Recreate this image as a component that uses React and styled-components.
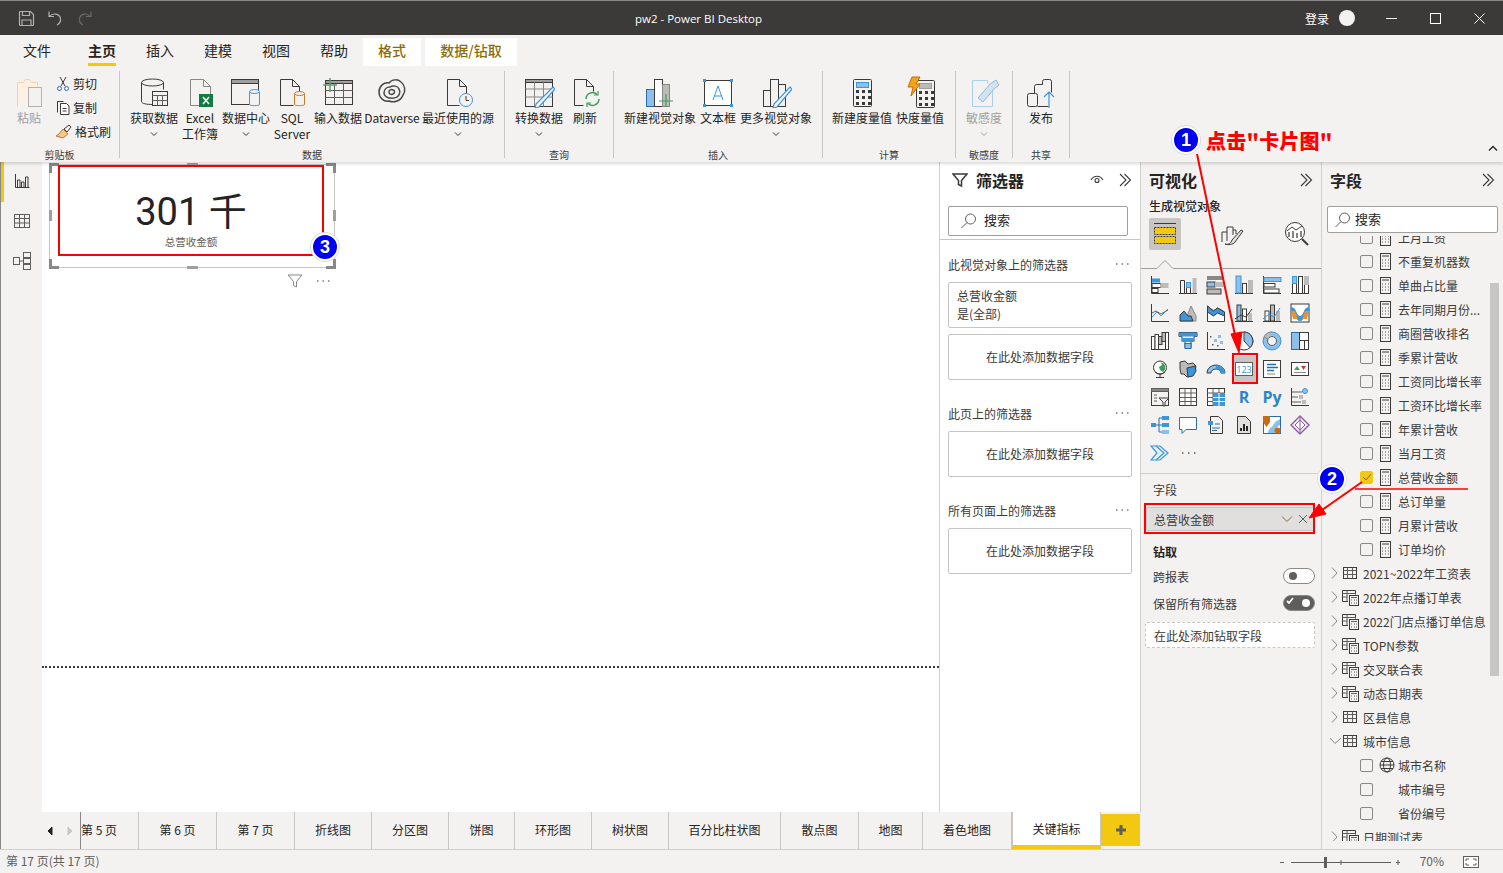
import React from 'react';
import styled, { createGlobalStyle, css } from 'styled-components';

const GlobalStyle = createGlobalStyle`
  html, body { margin: 0; padding: 0; height: 100%; overflow: hidden; }
  body {
    font-family: "Noto Sans CJK SC", "Noto Sans", sans-serif;
    font-size: 12px;
    color: #252423;
    background: #f3f2f1;
  }
  svg { display: block; flex: none; }
`;

const Window = styled.div`
  position: relative;
  width: 1503px;
  height: 873px;
  display: flex;
  flex-direction: column;
  overflow: hidden;
`;

/* ---------- title bar ---------- */
const TitleBar = styled.div`
  height: 34px;
  flex: none;
  background: #3b3a39;
  border-top: 1px solid #8a8886;
  display: flex;
  align-items: center;
  padding-right: 2px;
  color: #fff;
`;
const QuickTools = styled.div`
  display: flex;
  align-items: center;
  gap: 12px;
  width: 380px;
  padding-left: 18px;
`;
const WindowTitle = styled.div`
  flex: 1;
  text-align: center;
  font-family: "Open Sans", "Noto Sans CJK SC", sans-serif;
  font-size: 11.5px;
  padding-right: 306px;
`;
const SignIn = styled.div`
  display: flex;
  align-items: center;
  gap: 10px;
  margin-right: 14px;
`;
const Avatar = styled.div`
  width: 16px;
  height: 16px;
  border-radius: 50%;
  background: #f3f2f1;
`;
const WinButton = styled.div`
  width: 44px;
  display: flex;
  justify-content: center;
`;

/* ---------- ribbon ---------- */
const TabRow = styled.div`
  height: 31px;
  flex: none;
  display: flex;
  align-items: flex-end;
  padding-left: 8px;
  background: #f3f2f1;
`;
const RibbonTab = styled.div`
  width: ${p => p.$w || 58}px;
  height: 28px;
  box-sizing: border-box;
  padding-bottom: 5px;
  margin-left: ${p => p.$before || 0}px;
  margin-right: ${p => p.$gap || 0}px;
  display: flex;
  justify-content: center;
  align-items: center;
  font-size: 14px;
  position: relative;
  color: #252423;
  ${p => p.$context && css`
    background: #fff;
    color: #8a6d0b;
    font-weight: 500;
  `}
  ${p => p.$active && css`
    font-weight: 700;
    &::after {
      content: '';
      position: absolute;
      left: 15px;
      right: 15px;
      bottom: 0;
      height: 3px;
      background: #f2c811;
    }
  `}
`;
const Ribbon = styled.div`
  height: 96px;
  flex: none;
  display: flex;
  background: #f3f2f1;
  box-shadow: 0 2px 3px rgba(0, 0, 0, .14);
  position: relative;
  z-index: 2;
`;
const Group = styled.div`
  width: ${p => p.$w}px;
  height: 87px;
  margin-top: 5px;
  box-sizing: border-box;
  border-right: 1px solid #c8c6c4;
  display: flex;
  flex-direction: column;
  flex: none;
`;
const GroupBody = styled.div`
  flex: 1;
  display: flex;
  padding-left: ${p => p.$pad || 0}px;
`;
const GroupLabel = styled.div`
  height: 14px;
  margin-bottom: -4px;
  line-height: 14px;
  font-size: 10px;
  text-align: center;
  color: #3b3a39;
`;
const RibbonButton = styled.div`
  width: ${p => p.$w}px;
  flex: none;
  display: flex;
  flex-direction: column;
  align-items: center;
  color: ${p => (p.$muted ? '#a19f9d' : '#252423')};
`;
const IconBox = styled.div`
  height: 34px;
  padding-top: 5px;
`;
const BtnLine = styled.div`
  height: 16px;
  line-height: 16px;
  font-size: 12px;
  white-space: nowrap;
  display: flex;
  align-items: center;
`;
const SmallStack = styled.div`
  display: flex;
  flex-direction: column;
  gap: 5px;
  padding: 3px 0 0 8px;
`;
const SmallButton = styled.div`
  display: flex;
  align-items: center;
  gap: 2px;
  height: 19px;
`;
const Collapse = styled.div`
  margin: 79px 0 0 auto;
  padding-right: 5px;
`;

/* ---------- body ---------- */
const Body = styled.div`
  flex: 1;
  display: flex;
  min-height: 0;
`;
const Rail = styled.div`
  width: 41px;
  flex: none;
  background: #f3f2f1;
  border-left: 1px solid #8a8886;
  border-right: 1px solid #c8c6c4;
  box-sizing: content-box;
  margin-right: -1px;
  display: flex;
  flex-direction: column;
`;
const RailItem = styled.div`
  height: 40px;
  box-sizing: border-box;
  padding-bottom: 2px;
  display: flex;
  align-items: center;
  justify-content: center;
  box-shadow: ${p => (p.$active ? 'inset 3px 0 0 #f2c811' : 'none')};
`;
const Center = styled.div`
  width: 1099px;
  flex: none;
  display: flex;
  flex-direction: column;
`;
const TopRow = styled.div`
  height: 650px;
  flex: none;
  display: flex;
  background: #fff;
`;
const Canvas = styled.div`
  width: 897px;
  flex: none;
  border-right: 1px solid #d2d0ce;
  background: #fff;
`;
const Page = styled.div`
  position: relative;
  height: 503px;
  margin-top: 1px;
  border-bottom: 2px dotted #3b3a39;
`;
const CardFrame = styled.div`
  position: absolute;
  left: 7px;
  top: 1px;
  width: 284px;
  height: 102px;
  border: 1px solid #c8c6c4;
`;
const RedRect = styled.div`
  position: absolute;
  left: 8px;
  top: 0;
  width: 262px;
  height: 87px;
  border: 2px solid #f00;
  display: flex;
  flex-direction: column;
  align-items: center;
`;
const CardValue = styled.div`
  font-family: Roboto, "Noto Sans CJK SC", sans-serif;
  font-size: 38px;
  line-height: 46px;
  margin-top: 22px;
  color: #252423;
  white-space: pre;
`;
const CardLabel = styled.div`
  font-size: 10.5px;
  line-height: 14px;
  color: #605e5c;
`;
const handleSpots = {
  tl: 'left:-1px;top:-2px;border-left-width:3px;border-top-width:3px;',
  tr: 'right:-2px;top:-2px;border-right-width:3px;border-top-width:3px;',
  bl: 'left:-1px;bottom:-2px;border-left-width:3px;border-bottom-width:3px;',
  br: 'right:-2px;bottom:-2px;border-right-width:3px;border-bottom-width:3px;',
};
const Corner = styled.div`
  position: absolute;
  width: 7px;
  height: 7px;
  border: 0 solid #8a8886;
  ${p => handleSpots[p.$at]}
`;
const Mid = styled.div`
  position: absolute;
  background: #a19f9d;
  ${p => (p.$at === 't' || p.$at === 'b')
    ? `width:11px;height:3px;left:137px;${p.$at === 't' ? 'top:-2px' : 'bottom:-2px'};`
    : `width:3px;height:11px;top:45px;${p.$at === 'l' ? 'left:-1px' : 'right:-2px'};`}
`;
const CardTools = styled.div`
  position: absolute;
  left: 245px;
  top: 110px;
  display: flex;
  align-items: center;
  gap: 12px;
`;

/* ---------- filter pane ---------- */
const FilterPane = styled.div`
  flex: 1;
  background: #fff;
  border-right: 1px solid #d2d0ce;
  display: flex;
  flex-direction: column;
`;
const PaneHead = styled.div`
  height: 36px;
  flex: none;
  display: flex;
  align-items: center;
  padding: ${p => p.$pad || '0 8px'};
`;
const PaneTitle = styled.div`
  font-size: 16px;
  font-weight: 700;
  flex: 1;
  margin-left: ${p => p.$ml || 0}px;
  color: #252423;
`;
const Gap = styled.span`
  width: ${p => p.$w}px;
  flex: none;
`;
const SearchBox = styled.div`
  height: ${p => p.$h || 28}px;
  flex: none;
  margin: ${p => p.$m || '8px 12px 0 8px'};
  border: 1px solid #a19f9d;
  border-radius: 2px;
  background: #fff;
  display: flex;
  align-items: center;
  gap: ${p => p.$gap || 6}px;
  padding-left: ${p => p.$pad || 11}px;
  color: #252423;
  font-size: 13px;
`;
const SearchText = styled.span`
  margin-top: -3px;
`;
const PaneRule = styled.div`
  height: 1px;
  background: #c8c6c4;
  margin-top: 3px;
`;
const FilterHead = styled.div`
  display: flex;
  justify-content: space-between;
  align-items: center;
  height: 20px;
  margin: ${p => p.$top}px 10px ${p => p.$bottom}px 8px;
  color: #3b3a39;
`;
const FilterCard = styled.div`
  height: 44px;
  margin: 0 8px 6px;
  border: 1px solid #c8c6c4;
  border-radius: 2px;
  display: flex;
  flex-direction: column;
  justify-content: center;
  box-sizing: content-box;
  line-height: 18px;
  color: #3b3a39;
  ${p => p.$drop
    ? 'align-items:center;'
    : 'padding-left:8px;padding-bottom:1px;height:43px;'}
`;

/* ---------- page tabs ---------- */
const PageTabs = styled.div`
  flex: 1;
  display: flex;
  align-items: stretch;
  background: #f3f2f1;
`;
const TabNav = styled.div`
  width: 39px;
  flex: none;
  display: flex;
  align-items: center;
  gap: 14px;
  padding-left: 5px;
  box-sizing: border-box;
  border-right: 1px solid #8a8886;
`;
const PageTab = styled.div`
  width: ${p => p.$w}px;
  flex: none;
  box-sizing: border-box;
  display: flex;
  align-items: center;
  justify-content: ${p => (p.$clip ? 'flex-start' : 'center')};
  padding-bottom: 2px;
  white-space: pre;
  border-right: 1px solid #c8c6c4;
  color: #252423;
  ${p => p.$active && css`
    background: #fff;
    padding-bottom: 0;
    border-bottom: 4px solid #f2c811;
    border-left: 1px solid #c8c6c4;
  `}
`;
const AddTab = styled.div`
  width: 39px;
  height: 32px;
  margin-top: 2px;
  flex: none;
  background: #f2c811;
  display: flex;
  align-items: center;
  justify-content: center;
`;

/* ---------- visualizations pane ---------- */
const VizPane = styled.div`
  width: 180px;
  flex: none;
  box-sizing: content-box;
  background: #f3f2f1;
  border-right: 1px solid #d2d0ce;
  display: flex;
  flex-direction: column;
`;
const SubTitle = styled.div`
  font-weight: 500;
  line-height: 16px;
  padding-left: 8px;
  color: #252423;
`;
const VizTabs = styled.div`
  display: flex;
  align-items: center;
  height: 32px;
  margin: 4px 0 12px 8px;
  position: relative;
`;
const VizTab = styled.div`
  width: 32px;
  height: 32px;
  margin-right: ${p => p.$gap || 0}px;
  border-radius: 2px;
  display: flex;
  align-items: center;
  justify-content: center;
  background: ${p => (p.$active ? '#c8c6c4' : 'transparent')};
`;
const Notch = styled.svg`
  margin-top: -4px;
`;
const VizGrid = styled.div`
  display: grid;
  grid-template-columns: repeat(6, 28px);
  grid-auto-rows: 28px;
  padding: 2px 0 0 5px;
`;
const VizCell = styled.div`
  display: flex;
  align-items: center;
  justify-content: center;
  background: ${p => (p.$on ? '#c8c6c4' : 'transparent')};
  ${p => p.$on && 'margin: 1px 2px; '}
`;
const LangGlyph = styled.span`
  font-family: "Open Sans", sans-serif;
  font-weight: 700;
  font-size: ${p => p.$s}px;
  color: #2a86c8;
`;
const PaneRule2 = styled.div`
  height: 1px;
  background: #d2d0ce;
  margin-top: 6px;
`;
const WellTitle = styled.div`
  line-height: 16px;
  margin: 8px 0 9px 12px;
  color: #3b3a39;
`;
const Well = styled.div`
  height: 24px;
  margin: 0 6px 0 5px;
  box-sizing: border-box;
  background: #e1dfdd;
  border: 1px solid #c8c6c4;
  border-radius: 2px;
  display: flex;
  align-items: center;
  padding: 0 6px 0 7px;
  color: #3b3a39;
`;
const WellText = styled.div`
  flex: 1;
`;
const DrillTitle = styled.div`
  font-weight: 700;
  line-height: 16px;
  margin: 13px 0 8px 12px;
  color: #252423;
`;
const ToggleRow = styled.div`
  display: flex;
  justify-content: space-between;
  align-items: center;
  height: 16px;
  margin: 0 6px ${p => p.$mb || 0}px 12px;
  color: #3b3a39;
`;
const Toggle = styled.div`
  width: 32px;
  height: 16px;
  box-sizing: border-box;
  border-radius: 8px;
  border: 1px solid #8a8886;
  background: ${p => (p.$on ? '#605e5c' : '#fff')};
  position: relative;
  &::after {
    content: '';
    position: absolute;
    top: 3px;
    left: ${p => (p.$on ? '18px' : '5px')};
    width: 8px;
    height: 8px;
    border-radius: 50%;
    background: ${p => (p.$on ? '#fff' : '#605e5c')};
  }
`;
const DropZone = styled.div`
  height: 26px;
  margin: 11px 6px 0 4px;
  box-sizing: border-box;
  border: 1px dashed #c8c6c4;
  border-radius: 2px;
  background: #fff;
  display: flex;
  align-items: center;
  padding-left: 8px;
  color: #3b3a39;
`;

/* ---------- fields pane ---------- */
const FieldsPane = styled.div`
  flex: 1;
  background: #f3f2f1;
  display: flex;
  flex-direction: column;
  position: relative;
  min-width: 0;
`;
const FieldScroll = styled.div`
  flex: 1;
  overflow: hidden;
  margin: 3px 0 8px;
  position: relative;
`;
const FieldList = styled.div`
  margin-top: -11px;
`;
const FieldRow = styled.div`
  height: 24px;
  display: flex;
  align-items: center;
  white-space: nowrap;
  color: #3b3a39;
  padding-left: ${p => p.$pad}px;
`;
const CheckBox = styled.div`
  width: 11px;
  height: 11px;
  box-sizing: content-box;
  border: 1px solid #8a8886;
  border-radius: 2px;
  margin-right: 6px;
  flex: none;
  display: flex;
  align-items: center;
  justify-content: center;
  ${p => p.$on && 'background:#f2c811;border-color:#f2c811;'}
`;
const FieldIcon = styled.div`
  width: ${p => p.$w || 19}px;
  flex: none;
  display: flex;
  justify-content: flex-start;
`;
const FieldName = styled.div`
  margin-left: ${p => p.$ml || 0}px;
`;
const Chevron = styled.div`
  width: ${p => p.$w || 12}px;
  flex: none;
`;
const ScrollThumb = styled.div`
  position: absolute;
  left: 168px;
  top: 121px;
  width: 9px;
  height: 393px;
  background: #c8c6c4;
`;

/* ---------- status bar ---------- */
const StatusBar = styled.div`
  height: 23px;
  flex: none;
  border-top: 1px solid #d2d0ce;
  background: #f3f2f1;
  display: flex;
  align-items: center;
  justify-content: space-between;
  padding: 0 24px 0 6px;
  color: #605e5c;
`;
const PageCount = styled.div`
  padding-bottom: 3px;
`;
const Zoom = styled.div`
  display: flex;
  align-items: center;
  color: #605e5c;
`;
const ZoomPct = styled.div`
  margin: 0 19px 0 20px;
  padding-bottom: 2px;
`;

/* ---------- annotations, they lie over everything ---------- */
const Marks = styled.svg`
  position: absolute;
  left: 0;
  top: 0;
  pointer-events: none;
  z-index: 6;
`;
const Badge = styled.div`
  position: absolute;
  left: ${p => p.$x - 14}px;
  top: ${p => p.$y - 14}px;
  width: 24px;
  height: 24px;
  border-radius: 50%;
  background: #0000f0;
  border: 2px solid #fff;
  box-shadow: 0 0 0 1px #ddd;
  color: #fff;
  font-family: "Liberation Sans", sans-serif;
  font-weight: 700;
  font-size: 18px;
  line-height: 24px;
  text-align: center;
  z-index: 7;
`;
const Callout = styled.div`
  position: absolute;
  left: 1206px;
  top: 127px;
  color: #f00;
  font-weight: 900;
  font-size: 20px;
  letter-spacing: .2px;
  line-height: 28px;
  white-space: nowrap;
  z-index: 7;
`;

/* ---------- icons ---------- */
const D = '#3b3a39';
const B = '#3a96dd';
const L = '#8cc0ea';
const G = '#bdbbb9';

const Ico = ({ s = 32, h, vb, children, c = D, sw = 1 }) => (
  <svg width={s} height={h || s} viewBox={vb || `0 0 ${s} ${h || s}`} fill="none" stroke={c} strokeWidth={sw}>
    {children}
  </svg>
);

const Caret = ({ c = '#3b3a39' }) => (
  <Ico s={8} h={6} c={c}><path d="M1 1.5l3 3 3-3" /></Ico>
);

const PasteIcon = () => (
  <Ico s={30} h={34}>
    <path d="M3.5 30.5v-24h6l2-3h4l2 3h6v4" stroke="#f3d2a8" fill="#fbf0e2" />
    <rect x="14.5" y="11.5" width="13" height="19" stroke="#b3b0ad" fill="#f3f2f1" />
  </Ico>
);
const CutIcon = () => (
  <Ico s={16}><path d="M5 1l5 9M11 1L6 10" /><circle cx="4.5" cy="12.5" r="2" stroke="#2b6cb0" /><circle cx="11.5" cy="12.5" r="2" stroke="#2b6cb0" /></Ico>
);
const CopyIcon = () => (
  <Ico s={16}><path d="M2.5 12.5v-11h6" /><path d="M5.5 14.5v-11h6l2.500 2.500v8.500z" fill="#fff" /><path d="M7.500 8.500h4M7.500 11h4" /></Ico>
);
const BrushIcon = () => (
  <Ico s={18} h={16}><path d="M9 5l5-4 2 2-4 5z" /><path d="M8 5l5 5-5 4-7-2 3-2z" fill="#f3c78d" stroke="#c9772a" /></Ico>
);
const GetDataIcon = () => (
  <Ico>
    <path d="M3.500 6.500v19c0 2 5 3 11 3" /><path d="M25.500 6.500v7" /><ellipse cx="14.500" cy="6.500" rx="11" ry="3.500" />
    <rect x="14.500" y="15.500" width="15" height="14" fill="#f3f2f1" />
    <path d="M14.500 19.500h15M14.500 24.500h15M19.500 19.500v10M24.500 19.500v10" stroke="#605e5c" />
  </Ico>
);
const ExcelIcon = () => (
  <Ico>
    <path d="M6.500 29.500v-26h13l7 7v8M6.500 29.500h10" stroke="#8a8886" />
    <path d="M19.500 3.500v7h7" stroke="#8a8886" />
    <rect x="15" y="18" width="14" height="13" fill="#107c41" stroke="none" />
    <path d="M19 21l6 7M25 21l-6 7" stroke="#fff" strokeWidth="1.500" />
  </Ico>
);
const DataHubIcon = () => (
  <Ico>
    <rect x="1.500" y="3.500" width="27" height="25" />
    <rect x="1.500" y="3.500" width="27" height="4" fill="#a19f9d" />
    <path d="M19.500 15.500v13c0 1.500 10 1.500 10 0v-13" fill="#f3f2f1" stroke={B} />
    <ellipse cx="24.500" cy="15.500" rx="5" ry="2" stroke={B} fill="#f3f2f1" />
  </Ico>
);
const SqlIcon = () => (
  <Ico>
    <path d="M4.500 29.500v-26h12l7 7v6M4.500 29.500h13" /><path d="M16.500 3.500v7h7" />
    <path d="M18.500 17.500v11c0 1.500 10 1.500 10 0v-11" fill="#f3f2f1" stroke="#ca7a2b" />
    <ellipse cx="23.500" cy="17.500" rx="5" ry="2" stroke="#ca7a2b" fill="#f3f2f1" />
  </Ico>
);
const EnterIcon = () => (
  <Ico>
    <rect x="3.500" y="4.500" width="27" height="24" />
    <rect x="3.500" y="4.500" width="27" height="3" fill="#a19f9d" />
    <path d="M3.500 14.500h27M3.500 21.500h27M12.500 7.500v21M21.500 7.500v21" stroke="#605e5c" />
    <path d="M1 9h14M8 2v14" stroke="#5f9e6e" strokeWidth="1.500" />
  </Ico>
);
const DataverseIcon = () => (
  <Ico sw={1.500} c="#4a4948">
    <path d="M3 16c0-6 5-10 10-9 3-4 9-4 12-1 4 3 5 9 2 13-2 6-9 8-14 6-5 1-10-3-10-9z" />
    <path d="M8 17c0-4 3-6 6-6 3-2 8-1 9 2 2 3 0 7-2 8-3 2-6 1-8 1-3-1-5-3-5-5z" />
    <path d="M13 16c0-2 2-3 4-2 2 0 2 3 0 4-2 1-4 0-4-2z" />
  </Ico>
);
const RecentIcon = () => (
  <Ico>
    <path d="M5.500 29.500v-26h12l7 7v7M5.500 29.500h12" /><path d="M17.500 3.500v7h7" />
    <circle cx="24" cy="24" r="6.500" stroke={B} fill="#f3f2f1" /><path d="M24 20v4.500h3" />
  </Ico>
);
const TransformIcon = () => (
  <Ico>
    <rect x="2.500" y="3.500" width="27" height="27" />
    <rect x="2.500" y="3.500" width="27" height="3" fill="#a19f9d" />
    <path d="M2.500 13h27M2.500 21h27M11.500 6.500v24M20.500 6.500v24" stroke="#8a8886" />
    <path d="M30 11l2 2-16 18-4 1 1-4z" fill="#f3f2f1" stroke={B} strokeWidth="1.200" />
  </Ico>
);
const RefreshIcon = () => (
  <Ico>
    <path d="M5.500 29.500v-26h12l7 7v5M5.500 29.500h9" /><path d="M17.500 3.500v7h7" />
    <path d="M17 23a6.500 6.500 0 0 1 11-4.500M30 23a6.500 6.500 0 0 1-11 4.500" stroke="#3f9d58" strokeWidth="1.500" />
    <path d="M29 15v4h-4M18 31v-4h4" stroke="#3f9d58" strokeWidth="1.200" />
  </Ico>
);
const NewVisualIcon = () => (
  <Ico>
    <rect x="2.500" y="13.500" width="8" height="17" fill={L} stroke="#2b6cb0" />
    <rect x="10.500" y="3.500" width="8" height="27" fill="#fff" />
    <rect x="18.500" y="8.500" width="7" height="22" fill={G} stroke="#8a8886" />
    <path d="M15 25h14M22 18v13" stroke="#3f9d58" strokeWidth="1.200" />
  </Ico>
);
const TextBoxIcon = () => (
  <Ico>
    <rect x="2.500" y="4.500" width="27" height="25" fill="#fff" />
    <path d="M11 24l5-14 5 14M12.500 20h7" stroke={B} />
    <rect x="1" y="3" width="3" height="3" fill={B} stroke="none" />
    <rect x="28" y="3" width="3" height="3" fill={B} stroke="none" />
    <rect x="1" y="28" width="3" height="3" fill={B} stroke="none" />
    <rect x="28" y="28" width="3" height="3" fill={B} stroke="none" />
  </Ico>
);
const MoreVisualIcon = () => (
  <Ico>
    <rect x="3.500" y="14.500" width="7" height="16" /><rect x="10.500" y="3.500" width="8" height="27" /><rect x="18.500" y="8.500" width="7" height="22" />
    <path d="M30 11l2 2-15 18-4 1 1-4z" fill="#f3f2f1" stroke={B} strokeWidth="1.200" />
  </Ico>
);
const CalcKeys = ({ x, y }) => (
  <g fill={D} stroke="none">
    {[0, 1, 2].map(r => [0, 1, 2].map(k => (
      <rect key={`${r}${k}`} x={x + k * 6} y={y + r * 6} width="3" height="3" />
    )))}
  </g>
);
const MeasureIcon = () => (
  <Ico>
    <rect x="7.500" y="3.500" width="18" height="27" rx="1" />
    <rect x="10.500" y="6.500" width="12" height="5" fill={L} stroke={B} />
    <CalcKeys x={10} y={14} />
  </Ico>
);
const QuickIcon = () => (
  <Ico>
    <rect x="12.500" y="4.500" width="18" height="27" rx="1" />
    <rect x="15.500" y="7.500" width="12" height="5" fill={G} stroke="#a19f9d" />
    <CalcKeys x={15} y={15} />
    <path d="M8 1h8l-4 7h4L7 20l2-9H4z" fill="#f2a516" stroke="#c8690f" />
  </Ico>
);
const SensitivityIcon = () => (
  <Ico>
    <path d="M4.500 4.500h15v3M4.500 4.500v26h20v-18" stroke="#a9d0ee" />
    <path d="M10 22l12-14 6-4 3 5-5 4-11 13z" fill="#cfe3f3" stroke="#9bb8cc" />
  </Ico>
);
const PublishIcon = () => (
  <Ico>
    <rect x="2.500" y="17.500" width="10" height="13" rx="2" />
    <path d="M9.500 17.500v-7a2 2 0 0 1 2-2h6" /><path d="M17.500 8.500v-3a2 2 0 0 1 2-2h5a2 2 0 0 1 2 2v11" />
    <path d="M12.500 30.500h11" />
    <path d="M24 32V16M19 21l5-5 5 5" stroke={B} strokeWidth="1.200" />
  </Ico>
);

const FunnelIcon = ({ s = 16, c = D, sw = 1.500 }) => (
  <Ico s={16} vb="0 0 16 16" c={c} sw={sw}><path d="M1 2h14l-5.500 6.500v5.500l-3 -1.500V8.500z" /></Ico>
);
const SearchIcon = () => (
  <Ico s={18} c="#605e5c"><circle cx="10.500" cy="7" r="5" /><path d="M7 10.500L1.500 16" /></Ico>
);
const DoubleChevron = () => (
  <Ico s={14} c="#3b3a39" sw={1.100}><path d="M2 1l6 6-6 6M6.500 1l6 6-6 6" /></Ico>
);
const CalcField = () => (
  <Ico s={12} h={17} c="#3b3a39">
    <rect x="1.500" y="0.500" width="10" height="16" />
    <path d="M3 3h7" />
    <path d="M3 7h1M6 7h1M9 7h1M3 10h1M6 10h1M9 10h1M3 13h1M6 13h1M9 13h1" stroke="#605e5c" />
  </Ico>
);
const TableField = () => (
  <Ico s={16} h={14}>
    <rect x="1.500" y="1.500" width="13" height="11" />
    <path d="M1.500 4.500h13M1.500 8.500h13M5.500 1.500v11M10.500 1.500v11" stroke="#605e5c" />
  </Ico>
);
const CalcTableField = () => (
  <Ico s={17} h={17}>
    <path d="M6 12.500H0.500v-11h13v4" />
    <path d="M0.500 4.500h13M0.500 8h5M5 1.500v11" stroke="#605e5c" />
    <rect x="7.500" y="6.500" width="9" height="10" fill="#f3f2f1" />
    <path d="M9 8.500h6M9 11h1M12 11h1M14 11h1M9 14h1M12 14h1M14 14h1" stroke="#605e5c" />
  </Ico>
);
const GlobeField = () => (
  <Ico s={16}>
    <circle cx="8" cy="8" r="7" /><ellipse cx="8" cy="8" rx="3.500" ry="7" /><path d="M1 8h14M2 4.500h12M2 11.500h12" />
  </Ico>
);
const Arrow = ({ down }) => (
  <Ico s={10} h={14} c="#8a8886">
    <path d={down ? 'M1 4l5 5 5-5' : 'M2 1.500l5 5.500-5 5.500'} />
  </Ico>
);

/* the visual gallery, 20px drawings */
const V = ({ children }) => <Ico s={20}>{children}</Ico>;
const axis = 'M1.500 1v17.500H19';
const base = 'M1 18.500h18';
const gallery = [
  <V><path d={axis} /><rect x="2" y="3.500" width="8" height="4" fill={B} stroke="none" /><rect x="2" y="8.500" width="9" height="4" fill="#fff" /><rect x="11" y="8.500" width="7" height="4" fill={G} stroke={G} /><rect x="2" y="13.500" width="6" height="4" fill="#fff" /></V>,
  <V><path d={base} /><path d="M2.500 18V5.500h4V18M8.500 18V7.500h4V18" /><rect x="8.500" y="7.500" width="4" height="5" fill={L} stroke={B} /><rect x="14.500" y="3" width="4" height="15" fill={G} stroke="none" /></V>,
  <V><rect x="1" y="1" width="16" height="4" fill="#8a8886" stroke="none" /><rect x="1" y="7" width="8" height="5" fill={L} stroke={D} /><rect x="9" y="7" width="10" height="5" fill={G} stroke="none" /><rect x="1" y="14" width="14" height="5" fill={G} stroke={D} /></V>,
  <V><path d={base} /><rect x="2" y="1" width="5" height="17" fill={L} stroke={B} /><rect x="8.500" y="8.500" width="4" height="10" fill="#fff" /><rect x="14" y="5" width="5" height="13" fill={G} stroke="none" /></V>,
  <V><path d={axis} /><rect x="2" y="2.500" width="17" height="4" fill={L} stroke={B} /><rect x="2" y="8.500" width="11" height="3.500" fill="#fff" /><rect x="2" y="14" width="15" height="4" fill="#fff" /></V>,
  <V><path d={base} /><rect x="2.500" y="1.500" width="4" height="17" fill="#fff" /><rect x="2.500" y="1.500" width="4" height="7" fill={L} stroke={B} /><rect x="8.500" y="1.500" width="4" height="17" fill="#fff" /><rect x="14.500" y="1.500" width="4" height="17" fill="#fff" /><rect x="14.500" y="1.500" width="4" height="8" fill={G} stroke={G} /></V>,
  <V><path d={axis} /><path d="M2 14l5-5 4 4 7-7" stroke={B} /><path d="M2 10l4-2 5 3 7-4" stroke="#605e5c" /></V>,
  <V><path d="M2 18l4-8 3 3 4-10 5 10v5z" fill={G} stroke="#8a8886" /><path d="M2 18V12l4-4 4 5 3 0 2 5z" fill={B} stroke={D} /></V>,
  <V><path d="M1.500 3l6 5 4-3 7 4v9.500h-17z" fill="#fff" stroke={D} /><path d="M1.500 3l6 5 4-3 7 4v4l-7-3-4 3-6-4z" fill={B} stroke={D} /></V>,
  <V><path d={base} /><rect x="3" y="2" width="4" height="16" fill={L} stroke={D} /><rect x="8.500" y="6" width="4" height="12" fill="#fff" /><rect x="14" y="10" width="4" height="8" fill={G} stroke="none" /><path d="M1 16l6-4 5 2 6-8" /></V>,
  <V><path d={base} /><rect x="3" y="8" width="4" height="10" fill="#fff" /><rect x="8.500" y="2" width="4" height="16" fill={G} stroke={D} /><rect x="14" y="8" width="4" height="10" fill={G} stroke="none" /><path d="M1 16l6-5 5 3 6-9" stroke={B} /></V>,
  <V><rect x="1" y="1" width="18" height="18" fill="#fff" /><path d="M1 4c6 0 5 9 9 9s3-9 9-9v6c-6 0-4 8-9 8s-3-8-9-8z" fill={B} stroke="none" /><path d="M1 8h4l3 8H3zM19 8h-4l-3 8h5z" fill="#e8932f" stroke="none" /></V>,
  <V><path d="M1.500 18.500h17" /><rect x="1.500" y="5.500" width="3.500" height="13" fill="#fff" /><rect x="5" y="3.500" width="3.500" height="15" fill="#fff" /><rect x="8.500" y="5.500" width="3.500" height="8" fill={G} stroke={D} /><rect x="12" y="1.500" width="3.500" height="9" fill={G} stroke={D} /><rect x="15.500" y="1.500" width="3" height="17" fill="#fff" /></V>,
  <V><path d="M1 1.500h18v4h-3v5h-3v6H7v-6H4v-5H1z" fill="none" /><rect x="1" y="1.500" width="18" height="4" fill={B} stroke="none" /><rect x="4" y="7" width="12" height="4" fill={B} stroke="none" /><rect x="7" y="12.500" width="6" height="5" fill={L} stroke="#2b6cb0" /></V>,
  <V><path d={axis} /><g fill={L} stroke="none"><rect x="12" y="4" width="3" height="3" /><rect x="8" y="8" width="3" height="3" /><rect x="14" y="10" width="3" height="3" /></g><g fill="#605e5c" stroke="none"><rect x="4" y="5" width="1.500" height="1.500" /><rect x="6" y="13" width="1.500" height="1.500" /><rect x="11" y="14" width="1.500" height="1.500" /></g></V>,
  <V><circle cx="10" cy="10" r="9" fill="#fff" /><path d="M10 10V1a9 9 0 0 1 6 15.500z" fill={L} stroke={D} /></V>,
  <V><circle cx="10" cy="10" r="9" fill={L} stroke={B} /><circle cx="10" cy="10" r="4.500" fill="#f3f2f1" stroke="#605e5c" /><path d="M10 1a9 9 0 0 0-8 5l4 2" stroke="#8a8886" fill={G} /></V>,
  <V><rect x="1.500" y="1.500" width="8" height="17" fill={L} stroke="#2b6cb0" /><rect x="9.500" y="1.500" width="9" height="8" fill="#fff" /><rect x="9.500" y="9.500" width="5" height="9" fill="#fff" /><rect x="14.500" y="9.500" width="4" height="9" fill="#fff" /></V>,
  <V><circle cx="10" cy="8.500" r="6.500" fill="#fff" /><path d="M7 3c3 0 5 1 5 3l-3 2 1 3 3 2c3-2 3-7 0-9z" fill="#3f9d58" stroke="none" /><path d="M5 13a7 7 0 0 0 10 0M10 15v3M6 18.500h8" /></V>,
  <V><path d="M2 3l5-1 3 3 5-1 3 3-1 5-3 5-5 1-3-3H3l-1-5z" fill={G} stroke={D} /><path d="M9 9l8-2 1 5-3 5-5 1z" fill={B} stroke={D} /></V>,
  <V><path d="M1 14a9 8 0 0 1 18 0h-4a5 4 0 0 0-10 0z" fill={L} stroke={D} /><path d="M10 6a9 8 0 0 1 9 8h-4a5 4 0 0 0-5-4z" fill={B} stroke="none" /></V>,
  <V><rect x="1.500" y="3.500" width="17" height="13" fill="#fff" stroke="#605e5c" /><text x="10" y="13.500" textAnchor="middle" fontSize="9" fill={B} stroke="none" fontFamily="Open Sans, sans-serif">123</text></V>,
  <V><rect x="1.500" y="1.500" width="17" height="17" fill="#fff" /><path d="M5 5.500h9M5 8.500h11M5 11.500h7" stroke="#2b6cb0" strokeWidth="1.400" /><path d="M5 15h8" stroke="#8a8886" /></V>,
  <V><rect x="1.500" y="3.500" width="17" height="13" fill="#fff" /><path d="M4 11l3-4 3 4z" fill="#3f9d58" stroke="none" /><path d="M11 7h5l-2.500 4z" fill="#d13438" stroke="none" /><path d="M4 13.500h12" stroke="#8a8886" /></V>,
  <V><rect x="1.500" y="1.500" width="17" height="17" /><rect x="1.500" y="1.500" width="17" height="3" fill="#8a8886" stroke="#605e5c" /><path d="M4 8h3M4 11h3M4 14h3" stroke="#605e5c" /><path d="M9 11h10l-4 4v4h-2v-4z" fill="#f3f2f1" stroke={D} /></V>,
  <V><rect x="1.500" y="1.500" width="17" height="17" fill="#fff" /><path d="M1.500 6h17M1.500 10.500h17M1.500 14.500h17M7 1.500v17M13 1.500v17" stroke="#605e5c" /></V>,
  <V><rect x="1.500" y="1.500" width="17" height="17" fill="#fff" /><path d="M1.500 6h17M1.500 10.500h17M1.500 14.500h17M7 1.500v17M13 1.500v17" stroke="#605e5c" /><rect x="7" y="6" width="12" height="13" fill={B} stroke="none" /><path d="M7 10.500h12M7 14.500h12M13 6v13" stroke="#fff" /></V>,
  <LangGlyph $s={16}>R</LangGlyph>,
  <LangGlyph $s={16}>Py</LangGlyph>,
  <V><path d={axis} /><path d="M2 5h10M2 10h6M2 15h9" stroke="#605e5c" /><circle cx="15" cy="4" r="2.500" fill={L} stroke={B} /><rect x="9" y="8" width="4" height="4" fill={G} stroke="none" /><rect x="12" y="13" width="4" height="4" fill={G} stroke="none" /></V>,
  <V><rect x="1" y="8" width="5" height="4" fill={B} stroke="none" /><path d="M6 10h3M9 3v14M9 3h3M9 10h3M9 17h3" stroke="#2b6cb0" /><rect x="12" y="1" width="7" height="4" fill={B} stroke="none" /><rect x="12" y="8" width="7" height="4" fill={B} stroke="none" /><rect x="12" y="15" width="7" height="4" fill={L} stroke="none" /></V>,
  <V><path d="M1.500 2.500h17v12H8l-4 4v-4H1.500z" fill="#fff" stroke="#2b6cb0" /></V>,
  <V><path d="M4.500 1.500h8l4 4v13h-12z" fill="#f3f2f1" /><rect x="2" y="6" width="5" height="4" fill={B} stroke="none" /><path d="M9 9h5M6 13h8M6 15.500h5" stroke="#2b6cb0" /></V>,
  <V><path d="M3.500 1.500h8l5 5v12h-13z" fill="#e1dfdd" /><path d="M7 16v-3M10 16V9M13 16v-5" strokeWidth="2" stroke="#252423" /></V>,
  <V><rect x="1.500" y="1.500" width="17" height="17" fill="#fff" stroke="#2b6cb0" /><path d="M6 18c1-6 4-5 6-9 1-3 3-3 6-5v6c-2 1-4 2-5 8z" fill={L} stroke="none" /><path d="M1 1h7v6l-3.500 5L1 7z" fill="#ca6a12" stroke="none" /><circle cx="15.500" cy="15.500" r="3" fill="#ca6a12" stroke="none" /></V>,
  <V><path d="M10 1l9 9-9 9-9-9z" stroke="#8e5aa8" strokeWidth="1.400" fill="#f3eaf7" /><path d="M10 5l5 5-5 5-5-5z" stroke="#8e5aa8" fill="#fff" /><path d="M10 1v18" stroke="#8e5aa8" /></V>,
  <V><path d="M1 3h9l8 7-8 7H1l6-7z" stroke={B} strokeWidth="1.200" fill="#e6f1fa" /><path d="M6 3l8 7-8 7" stroke={B} strokeWidth="1.200" /></V>,
  <V><path d="M4 10h1.500M10 10h1.500M16 10h1.500" stroke="#605e5c" strokeWidth="1.500" /></V>,
];

const fields = [
  '上月工资', '不重复机器数', '单曲占比量', '去年同期月份...', '商圈营收排名', '季累计营收',
  '工资同比增长率', '工资环比增长率', '年累计营收', '当月工资', '总营收金额', '总订单量', '月累计营收', '订单均价',
];
const tables = [
  ['2021~2022年工资表', 't'], ['2022年点播订单表', 'c'], ['2022门店点播订单信息', 'c'], ['TOPN参数', 'c'],
  ['交叉联合表', 'c'], ['动态日期表', 'c'], ['区县信息', 't'],
];
const pageTabs = [
  ['第 6 页', 78], ['第 7 页', 78], ['折线图', 77], ['分区图', 77], ['饼图', 66], ['环形图', 77],
  ['树状图', 77], ['百分比柱状图', 112], ['散点图', 78], ['地图', 64], ['着色地图', 89],
];

const Dots = () => (
  <Ico s={16} h={6} c="#3b3a39" sw={1.200}><path d="M2 3h1.500M7.500 3H9M13 3h1.500" /></Ico>
);

const Btn = ({ w, icon, lines, caret, muted }) => (
  <RibbonButton $w={w} $muted={muted}>
    <IconBox>{icon}</IconBox>
    <BtnLine>{lines[0]}</BtnLine>
    <BtnLine>{lines[1] || (caret ? <Caret c={muted ? '#a19f9d' : undefined} /> : null)}</BtnLine>
  </RibbonButton>
);

export default function App() {
  return (
    <Window>
      <GlobalStyle />
      <TitleBar>
        <QuickTools>
          <Ico s={17} c="#b3b0ad" sw={1.200}>
            <path d="M1.500 2.500a1 1 0 0 1 1-1h10l3 3v10a1 1 0 0 1-1 1h-12a1 1 0 0 1-1-1z" />
            <path d="M4.500 1.500v4h7v-4M4 15.500v-5.500h9v5.500" />
          </Ico>
          <Ico s={17} c="#b3b0ad" sw={1.200}><path d="M2 1.500v5h5M2.500 6.500c3-4 10-3 11 2 .5 3-1 5-3.500 6.500" /></Ico>
          <Ico s={17} c="#6b6a69" sw={1.200}><path d="M15 1.500v5h-5M14.500 6.500c-3-4-10-3-11 2-.5 3 1 5 3.500 6.500" /></Ico>
        </QuickTools>
        <WindowTitle>pw2 - Power BI Desktop</WindowTitle>
        <SignIn>登录<Avatar /></SignIn>
        <WinButton><Ico s={11} c="#fff"><path d="M0 5.500h11" /></Ico></WinButton>
        <WinButton><Ico s={11} c="#fff"><rect x=".5" y=".5" width="10" height="10" /></Ico></WinButton>
        <WinButton><Ico s={11} c="#fff"><path d="M.5.500l10 10M10.500.500l-10 10" /></Ico></WinButton>
      </TitleBar>

      <TabRow>
        <RibbonTab>文件</RibbonTab>
        <RibbonTab $active $before={7}>主页</RibbonTab>
        <RibbonTab>插入</RibbonTab>
        <RibbonTab>建模</RibbonTab>
        <RibbonTab>视图</RibbonTab>
        <RibbonTab>帮助</RibbonTab>
        <RibbonTab $context $gap={4}>格式</RibbonTab>
        <RibbonTab $context $w={92}>数据/钻取</RibbonTab>
      </TabRow>

      <Ribbon>
        <Group $w={120}>
          <GroupBody $pad={11}>
            <Btn w={36} muted icon={<PasteIcon />} lines={['粘贴']} />
            <SmallStack>
              <SmallButton><CutIcon />剪切</SmallButton>
              <SmallButton><CopyIcon />复制</SmallButton>
              <SmallButton><BrushIcon />格式刷</SmallButton>
            </SmallStack>
          </GroupBody>
          <GroupLabel>剪贴板</GroupLabel>
        </Group>
        <Group $w={385}>
          <GroupBody $pad={11}>
            <Btn w={46} icon={<GetDataIcon />} lines={['获取数据']} caret />
            <Btn w={46} icon={<ExcelIcon />} lines={['Excel', '工作簿']} />
            <Btn w={46} icon={<DataHubIcon />} lines={['数据中心']} caret />
            <Btn w={46} icon={<SqlIcon />} lines={['SQL', 'Server']} />
            <Btn w={46} icon={<EnterIcon />} lines={['输入数据']} />
            <Btn w={62} icon={<DataverseIcon />} lines={['Dataverse']} />
            <Btn w={70} icon={<RecentIcon />} lines={['最近使用的源']} caret />
          </GroupBody>
          <GroupLabel>数据</GroupLabel>
        </Group>
        <Group $w={109}>
          <GroupBody $pad={11}>
            <Btn w={46} icon={<TransformIcon />} lines={['转换数据']} caret />
            <Btn w={46} icon={<RefreshIcon />} lines={['刷新']} />
          </GroupBody>
          <GroupLabel>查询</GroupLabel>
        </Group>
        <Group $w={209}>
          <GroupBody $pad={8}>
            <Btn w={76} icon={<NewVisualIcon />} lines={['新建视觉对象']} />
            <Btn w={40} icon={<TextBoxIcon />} lines={['文本框']} />
            <Btn w={76} icon={<MoreVisualIcon />} lines={['更多视觉对象']} caret />
          </GroupBody>
          <GroupLabel>插入</GroupLabel>
        </Group>
        <Group $w={133}>
          <GroupBody $pad={8}>
            <Btn w={62} icon={<MeasureIcon />} lines={['新建度量值']} />
            <Btn w={54} icon={<QuickIcon />} lines={['快度量值']} />
          </GroupBody>
          <GroupLabel>计算</GroupLabel>
        </Group>
        <Group $w={57}>
          <GroupBody>
            <Btn w={56} muted icon={<SensitivityIcon />} lines={['敏感度']} caret />
          </GroupBody>
          <GroupLabel>敏感度</GroupLabel>
        </Group>
        <Group $w={57}>
          <GroupBody>
            <Btn w={56} icon={<PublishIcon />} lines={['发布']} />
          </GroupBody>
          <GroupLabel>共享</GroupLabel>
        </Group>
        <Collapse>
          <Ico s={10} h={7} sw={1.400} c="#252423"><path d="M1 5.500l4-4 4 4" /></Ico>
        </Collapse>
      </Ribbon>

      <Body>
        <Rail>
          <RailItem $active>
            <Ico s={16}>
              <path d="M1.500 1v13.500h14" /><path d="M3.500 14V7h2.500v7M7.500 14V9H10v5M11.500 14V4H14v10" />
            </Ico>
          </RailItem>
          <RailItem>
            <Ico s={16} c="#605e5c"><rect x=".5" y="1.500" width="15" height="13" /><path d="M.5 5.500h15M.5 10h15M5.500 1.500v13M10.500 1.500v13" /></Ico>
          </RailItem>
          <RailItem>
            <Ico s={18} c="#605e5c">
              <rect x=".5" y="5.500" width="6" height="7" /><rect x="10.500" y=".5" width="7" height="5" /><rect x="10.500" y="6.500" width="7" height="5" /><rect x="10.500" y="12.500" width="7" height="5" />
              <path d="M6.500 9h4" />
            </Ico>
          </RailItem>
        </Rail>

        <Center>
          <TopRow>
            <Canvas>
              <Page>
                <CardFrame>
                  <Corner $at="tl" /><Corner $at="tr" /><Corner $at="bl" /><Corner $at="br" />
                  <Mid $at="t" /><Mid $at="b" /><Mid $at="l" /><Mid $at="r" />
                  <RedRect>
                    <CardValue>301 千</CardValue>
                    <CardLabel>总营收金额</CardLabel>
                  </RedRect>
                </CardFrame>
                <CardTools>
                  <FunnelIcon c="#8a8886" sw={1} />
                  <Dots />
                </CardTools>
              </Page>
            </Canvas>
            <FilterPane>
              <PaneHead $pad="0 8px 0 12px">
                <FunnelIcon />
                <PaneTitle $ml={8}>筛选器</PaneTitle>
                <Ico s={14} h={10} c="#3b3a39" sw={1.100}>
                  <path d="M1 5c3-5 9-5 12 0" /><circle cx="7" cy="5.500" r="2" />
                </Ico>
                <Gap $w={14} />
                <DoubleChevron />
              </PaneHead>
              <SearchBox>
                <SearchIcon /><SearchText>搜索</SearchText>
              </SearchBox>
              <PaneRule />
              <FilterHead $top={14} $bottom={8}>此视觉对象上的筛选器<Dots /></FilterHead>
              <FilterCard>
                <div>总营收金额</div>
                <div>是(全部)</div>
              </FilterCard>
              <FilterCard $drop>在此处添加数据字段</FilterCard>
              <FilterHead $top={17} $bottom={8}>此页上的筛选器<Dots /></FilterHead>
              <FilterCard $drop>在此处添加数据字段</FilterCard>
              <FilterHead $top={17} $bottom={8}>所有页面上的筛选器<Dots /></FilterHead>
              <FilterCard $drop>在此处添加数据字段</FilterCard>
            </FilterPane>
          </TopRow>
          <PageTabs>
            <TabNav>
              <Ico s={6} h={10}><path d="M5 1v8L1 5z" fill="#252423" stroke="#252423" /></Ico>
              <Ico s={6} h={10}><path d="M1 1v8l4-4z" fill="#c8c6c4" stroke="#c8c6c4" /></Ico>
            </TabNav>
            <PageTab $w={58} $clip>第 5 页</PageTab>
            {pageTabs.map(([name, w]) => (
              <PageTab key={name} $w={w}>{name}</PageTab>
            ))}
            <PageTab $w={89} $active>关键指标</PageTab>
            <AddTab>
              <Ico s={12} c="#605e5c" sw={3}><path d="M6 1v10M1 6h10" /></Ico>
            </AddTab>
          </PageTabs>
        </Center>

        <VizPane>
          <PaneHead>
            <PaneTitle>可视化</PaneTitle>
            <DoubleChevron />
          </PaneHead>
          <SubTitle>生成视觉对象</SubTitle>
          <VizTabs>
            <VizTab $active $gap={35}>
              <Ico s={26} h={24}>
                <path d="M2 1.500h22" />
                <rect x="2.500" y="5.500" width="21" height="7" fill="#f2c811" strokeDasharray="2 1" />
                <rect x="2.500" y="14.500" width="21" height="7" fill="#f2c811" strokeDasharray="2 1" />
              </Ico>
            </VizTab>
            <VizTab $gap={33}>
              <Ico s={24}>
                <path d="M2 20v-10h5V5h6v3h3v4" /><path d="M7 10v9M13 8v5" />
                <path d="M5 22c4 1 6-1 7-4l9-10 2 1-8 11c-2 3-7 3-10 2z" fill="#e1dfdd" />
              </Ico>
            </VizTab>
            <VizTab>
              <Ico s={26}>
                <circle cx="11" cy="11" r="9.500" fill="#fff" />
                <path d="M5 16v-5M9 17v-7M13 17v-5M17 16v-6" stroke="#605e5c" strokeWidth="1.500" />
                <path d="M3 10l5-4 4 3 6-4" />
                <path d="M18 18l6 6" strokeWidth="2" />
              </Ico>
            </VizTab>
          </VizTabs>
          <Notch width="180" height="11" viewBox="0 0 180 11" fill="none" stroke="#a19f9d">
            <path d="M0 10.500h16l8-8 8 8h148" />
          </Notch>
          <VizGrid>
            {gallery.map((icon, i) => (
              <VizCell key={i} $on={i === 21}>{icon}</VizCell>
            ))}
          </VizGrid>
          <PaneRule2 />
          <WellTitle>字段</WellTitle>
          <Well>
            <WellText>总营收金额</WellText>
            <Ico s={12} h={8} c="#8a6d3b"><path d="M1 1.500l5 5 5-5" /></Ico>
            <Gap $w={5} />
            <Ico s={10} c="#605e5c"><path d="M1 1l8 8M9 1L1 9" /></Ico>
          </Well>
          <DrillTitle>钻取</DrillTitle>
          <ToggleRow $mb={11}>跨报表<Toggle /></ToggleRow>
          <ToggleRow>
            保留所有筛选器
            <Toggle $on>
              <Ico s={12} h={10} c="#fff" sw={1.800}><path d="M3 5l2 2 4-5" /></Ico>
            </Toggle>
          </ToggleRow>
          <DropZone>在此处添加钻取字段</DropZone>
        </VizPane>

        <FieldsPane>
          <PaneHead $pad="0 8px 0 8px">
            <PaneTitle>字段</PaneTitle>
            <DoubleChevron />
          </PaneHead>
          <SearchBox $m="8px 5px 0 5px" $pad={6} $gap={3} $h={25}>
            <SearchIcon /><SearchText>搜索</SearchText>
          </SearchBox>
          <FieldScroll>
            <FieldList>
              {fields.map(name => (
                <FieldRow key={name} $pad={38}>
                  <CheckBox $on={name === '总营收金额'}>
                    {name === '总营收金额' && <Ico s={10} h={8} c="#8a6d0b"><path d="M1 4l3 3 5-6" /></Ico>}
                  </CheckBox>
                  <CalcField />
                  <FieldName $ml={7}>{name}</FieldName>
                </FieldRow>
              ))}
              {tables.map(([name, kind]) => (
                <FieldRow key={name} $pad={8}>
                  <Chevron><Arrow /></Chevron>
                  <FieldIcon $w={17}>{kind === 't' ? <TableField /> : <CalcTableField />}</FieldIcon>
                  <FieldName $ml={4}>{name}</FieldName>
                </FieldRow>
              ))}
              <FieldRow $pad={7}>
                <Chevron $w={13}><Ico s={13} h={8} c="#8a8886"><path d="M1 1l5 5.500L12 1" /></Ico></Chevron>
                <FieldIcon $w={17}><TableField /></FieldIcon>
                <FieldName $ml={4}>城市信息</FieldName>
              </FieldRow>
              <FieldRow $pad={38}>
                <CheckBox />
                <FieldIcon><GlobeField /></FieldIcon>
                <FieldName>城市名称</FieldName>
              </FieldRow>
              <FieldRow $pad={38}>
                <CheckBox />
                <FieldIcon />
                <FieldName>城市编号</FieldName>
              </FieldRow>
              <FieldRow $pad={38}>
                <CheckBox />
                <FieldIcon />
                <FieldName>省份编号</FieldName>
              </FieldRow>
              <FieldRow $pad={8}>
                <Chevron><Arrow /></Chevron>
                <FieldIcon $w={17}><CalcTableField /></FieldIcon>
                <FieldName $ml={4}>日期测试表</FieldName>
              </FieldRow>
            </FieldList>
          </FieldScroll>
          <ScrollThumb />
        </FieldsPane>
      </Body>

      <StatusBar>
        <PageCount>第 17 页(共 17 页)</PageCount>
        <Zoom>
          <Ico s={120} h={16} c="#605e5c">
            <path d="M0 8.500h4M11 8.500h100" />
            <rect x="44" y="3" width="3" height="11" fill="#605e5c" stroke="none" />
            <path d="M61 6v5" />
            <path d="M116 8.500h4M118 6v5" />
          </Ico>
          <ZoomPct>70%</ZoomPct>
          <Ico s={16} h={12} c="#605e5c">
            <rect x=".5" y=".5" width="15" height="11" fill="#fff" />
            <path d="M3 5V3h3M10 3h3v2M13 7v2h-3M6 9H3V7" />
          </Ico>
        </Zoom>
      </StatusBar>

      <Marks width="1503" height="873" viewBox="0 0 1503 873" fill="none" stroke="#f00">
        <path d="M1197 154L1236 340" strokeWidth="2" />
        <path d="M1239 353l-8-19 11-2z" fill="#f00" strokeWidth="1" />
        <rect x="1233" y="354" width="24" height="29" strokeWidth="2" />
        <path d="M1362 482L1322 510" strokeWidth="2" />
        <path d="M1309 518l10-14 7 10z" fill="#f00" strokeWidth="1" />
        <path d="M1355 489h113" strokeWidth="1.500" />
        <rect x="1145" y="504" width="169" height="29" strokeWidth="2" />
      </Marks>
      <Badge $x={1186} $y={140}>1</Badge>
      <Badge $x={1332} $y={479}>2</Badge>
      <Badge $x={325} $y={247}>3</Badge>
      <Callout>点击"卡片图"</Callout>
    </Window>
  );
}
